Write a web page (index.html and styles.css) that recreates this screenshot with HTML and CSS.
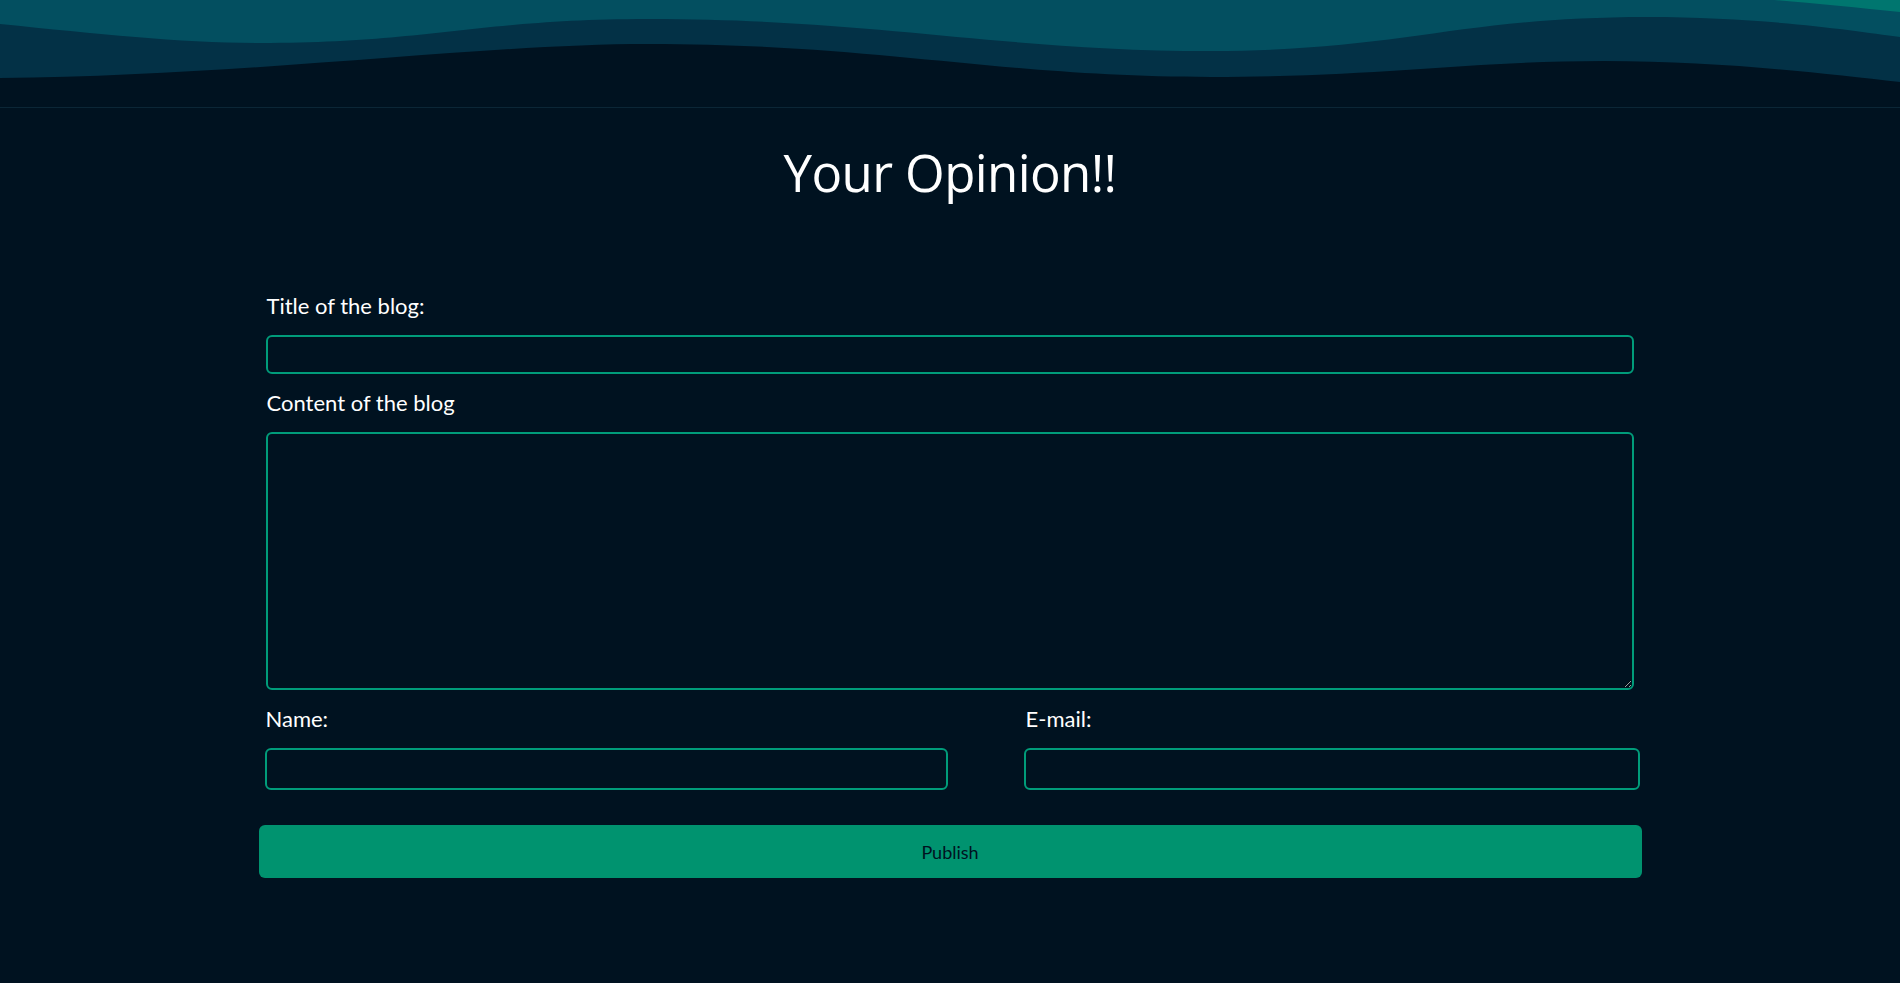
FILE: index.html
```html
<!DOCTYPE html>
<html lang="en">
<head>
<meta charset="utf-8">
<title>Your Opinion!!</title>
<link rel="stylesheet" href="styles.css">
</head>
<body>
<header class="waves">
  <svg class="waves-svg" viewBox="0 0 1900 107" preserveAspectRatio="none" xmlns="http://www.w3.org/2000/svg">
    <rect x="0" y="0" width="1900" height="107" fill="#001220"/>
    <path d="M0,0 L1900,0 L1900,82 C1820,73 1720,61 1604,61 C1470,61 1380,77 1211,77 C1000,77 880,44 648,44 C480,44 250,76 0,78 Z" fill="#033146"/>
    <path d="M0,0 L1900,0 L1900,37 C1850,30 1760,17 1647,17 C1460,17 1400,51 1211,51 C1000,51 880,19 648,19 C480,19 430,43 260,43 C180,43 100,34 0,24 Z" fill="#034f60"/>
    <path d="M1774,0 L1900,0 L1900,12 C1860,8 1810,3 1774,0 Z" fill="#00766f"/>
  </svg>
</header>
<main class="page">
  <h1 class="page-title">Your Opinion!!</h1>
  <form class="blog-form">
    <div class="field">
      <label class="field-label" for="title">Title of the blog:</label>
      <input class="field-input" id="title" type="text">
    </div>
    <div class="field">
      <label class="field-label" for="content">Content of the blog</label>
      <textarea class="field-input field-textarea" id="content"></textarea>
    </div>
    <div class="field-row">
      <div class="field-col">
        <label class="field-label" for="name">Name:</label>
        <input class="field-input field-input-tall" id="name" type="text">
      </div>
      <div class="field-col">
        <label class="field-label field-label-email" for="email">E-mail:</label>
        <input class="field-input field-input-tall" id="email" type="email">
      </div>
    </div>
    <button class="publish-btn" type="button">Publish</button>
  </form>
</main>
</body>
</html>
```
FILE: styles.css
```css
* {
  box-sizing: border-box;
}

html, body {
  margin: 0;
  padding: 0;
  height: 100%;
}

body {
  background: #001220;
  color: #ffffff;
  font-family: Lato, "Noto Sans", sans-serif;
  overflow: hidden;
}

.waves {
  height: 108px;
  border-bottom: 1px solid #0b2636;
}

.waves-svg {
  display: block;
  width: 100%;
  height: 107px;
}

.page {
  padding-top: 32px;
}

.page-title {
  margin: 0;
  text-align: center;
  font-family: "Open Sans", sans-serif;
  font-weight: 400;
  font-size: 51px;
  letter-spacing: -0.6px;
  line-height: 65px;
}

.blog-form {
  width: 1383px;
  margin: 88px auto 0;
  display: flex;
  flex-direction: column;
}

.field {
  padding: 0 8px 0 7px;
  margin-bottom: 16px;
  display: flex;
  flex-direction: column;
}

.field-label {
  display: block;
  font-size: 22px;
  line-height: 25px;
  margin-bottom: 17px;
  padding-left: 1px;
}

.field-input {
  display: block;
  width: 100%;
  height: 39px;
  background: #001220;
  border: 2px solid #009c7a;
  border-radius: 6px;
  color: #ffffff;
  font-family: Lato, sans-serif;
  font-size: 16px;
  padding: 4px 10px;
  outline: none;
}

.field-textarea {
  height: 258px;
  resize: vertical;
}

.field-input-tall {
  height: 42px;
}

.field-row {
  display: grid;
  grid-template-columns: 683px 616px;
  column-gap: 76px;
  padding-left: 6px;
}

.field-col {
  display: flex;
  flex-direction: column;
}

.field-label-email {
  padding-left: 2px;
}

.publish-btn {
  margin-top: 35px;
  height: 53px;
  width: 100%;
  background: #00936f;
  border: none;
  border-radius: 6px;
  color: #00121f;
  font-family: Lato, sans-serif;
  font-size: 18px;
  cursor: pointer;
}
```
